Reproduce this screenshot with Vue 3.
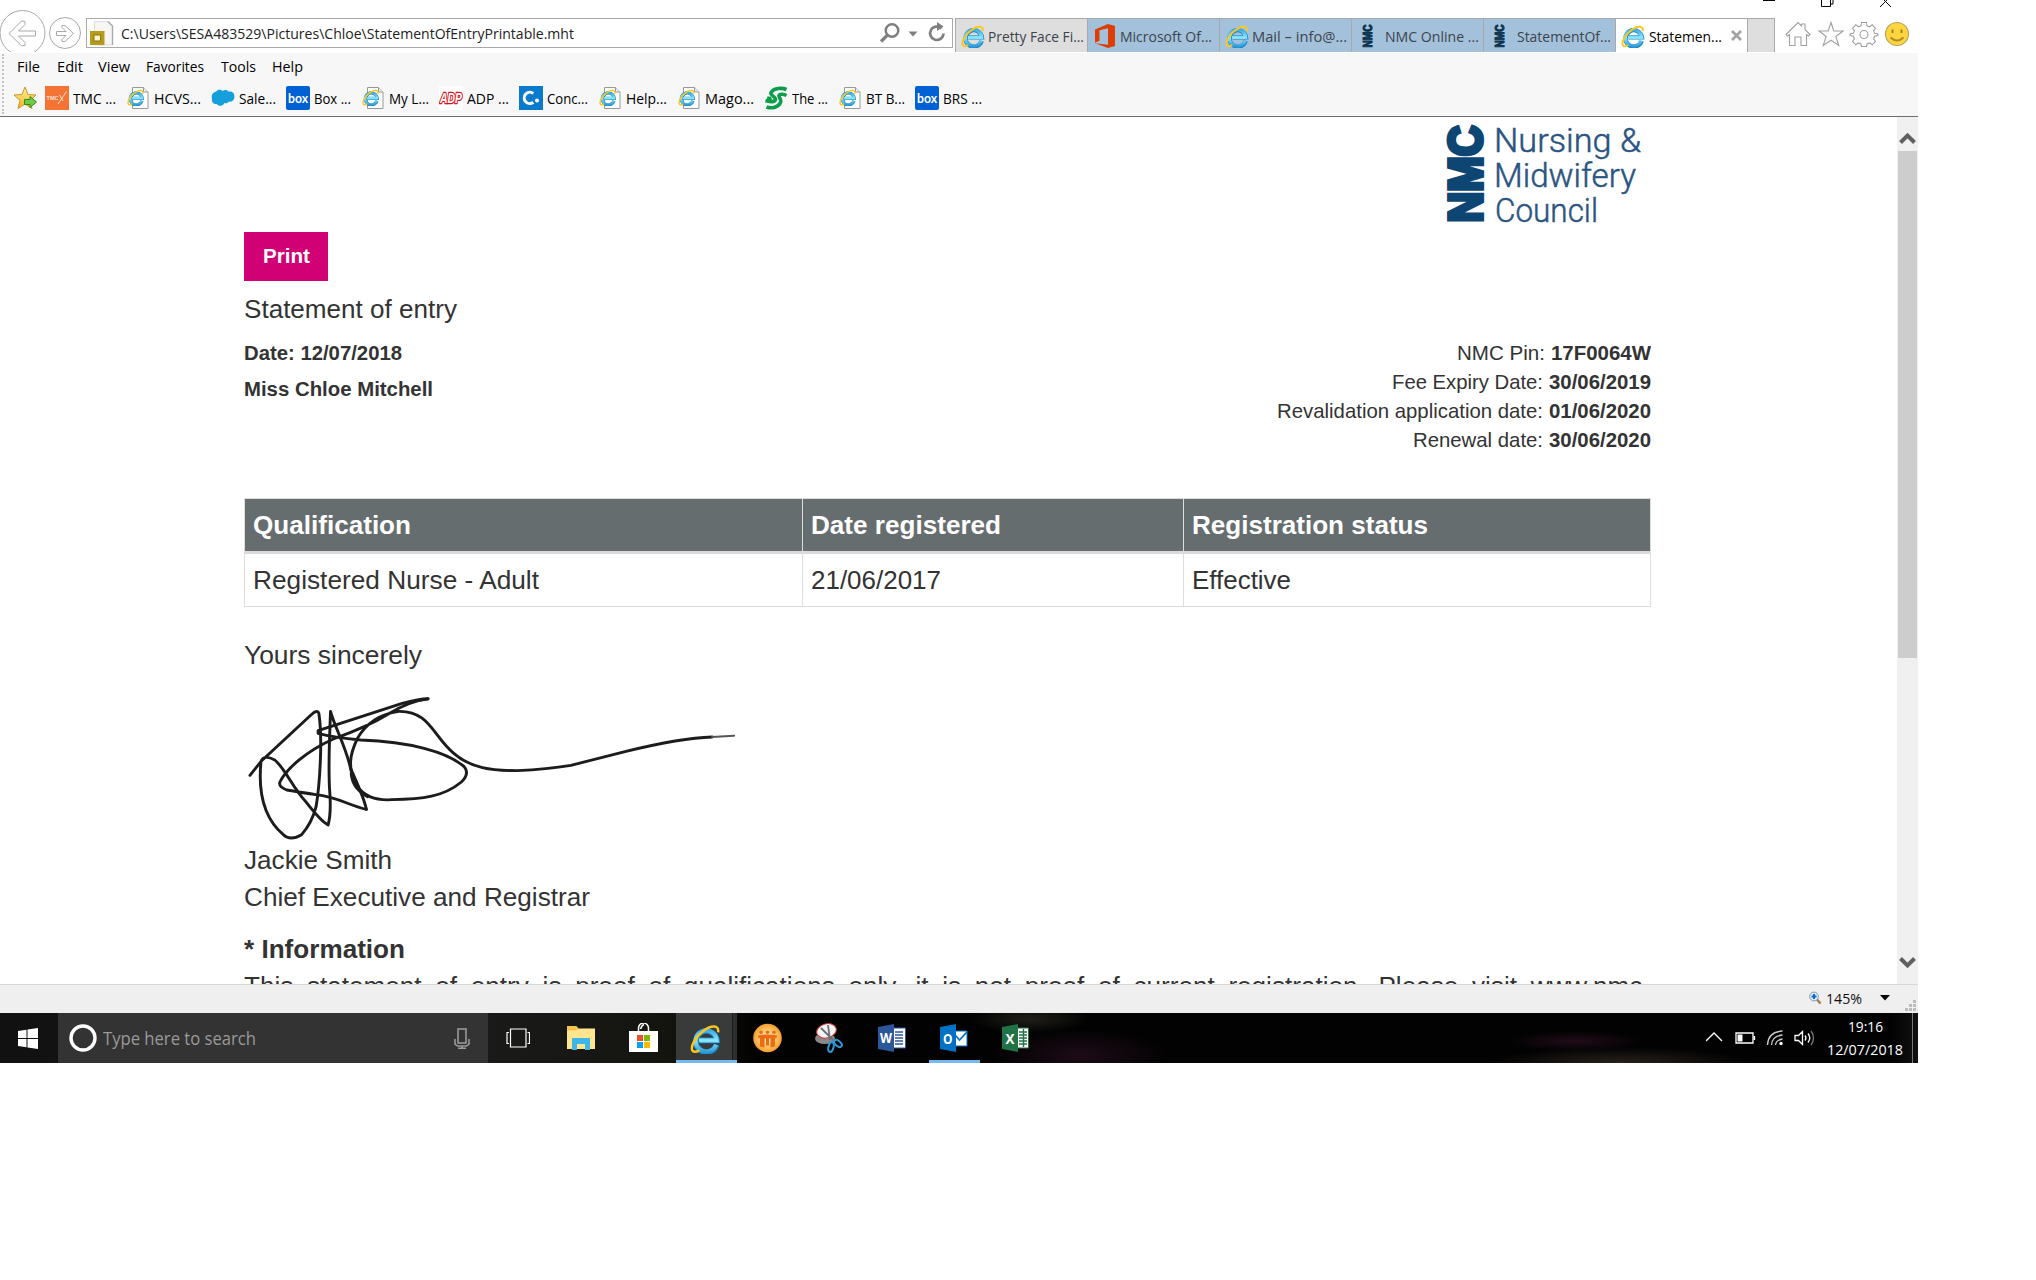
<script setup>
// Condenses a label horizontally so that it occupies the given width.
const vFit = {
  mounted(el, { value }) {
    const w = el.getBoundingClientRect().width
    if (!w) return
    el.style.transform = `scaleX(${value / w})`
    el.style.marginRight = `${value - w}px`
  },
}

const menus = [
  { t: 'File', w: 23, s: 39.5 },
  { t: 'Edit', w: 26, s: 41 },
  { t: 'View', w: 32, s: 48.5 },
  { t: 'Favorites', w: 58, s: 74.5 },
  { t: 'Tools', w: 35, s: 51 },
  { t: 'Help', w: 31, s: 50 },
]
const bookmarks = [
  { i: 'tmc', t: 'TMC ...', w: 43 },
  { i: 'page', t: 'HCVS...', w: 47 },
  { i: 'cloud', t: 'Sale...', w: 37 },
  { i: 'box', t: 'Box ...', w: 37 },
  { i: 'page', t: 'My L...', w: 40 },
  { i: 'adp', t: 'ADP ...', w: 42 },
  { i: 'concur', t: 'Conc...', w: 41 },
  { i: 'page', t: 'Help...', w: 41 },
  { i: 'page', t: 'Mago...', w: 49 },
  { i: 'schneider', t: 'The ...', w: 36 },
  { i: 'page', t: 'BT B...', w: 39 },
  { i: 'box', t: 'BRS ...', w: 39 },
]
const tabs = [
  { i: 'ie', t: 'Pretty Face Fi...', w: 96, c: 'grey' },
  { i: 'office', t: 'Microsoft Of...', w: 92, c: 'blue' },
  { i: 'ie', t: 'Mail – info@...', w: 95, c: 'blue' },
  { i: 'nmc', t: 'NMC Online ...', w: 94, c: 'blue' },
  { i: 'nmc', t: 'StatementOf...', w: 94, c: 'blue' },
  { i: 'ie', t: 'Statemen...', w: 73, c: 'active' },
]
const dates = [
  { k: 'NMC Pin:', v: '17F0064W', kw: 88, vw: 100 },
  { k: 'Fee Expiry Date:', v: '30/06/2019', kw: 151, vw: 102 },
  { k: 'Revalidation application date:', v: '01/06/2020', kw: 266, vw: 102 },
  { k: 'Renewal date:', v: '30/06/2020', kw: 130, vw: 102 },
]
</script>

<template>
  <svg class="defs" width="0" height="0">
    <defs>
      <linearGradient id="ieBlue" gradientUnits="userSpaceOnUse" x1="0" y1="4" x2="0" y2="23">
        <stop offset="0" stop-color="#2f9fdc" /><stop offset=".5" stop-color="#8be6fc" /><stop offset="1" stop-color="#2a97d6" />
      </linearGradient>
      <linearGradient id="gold" x1="0" y1="0" x2="0" y2="1">
        <stop offset="0" stop-color="#fff6a0" /><stop offset="1" stop-color="#f2b01e" />
      </linearGradient>
      <radialGradient id="orange"><stop offset="0" stop-color="#fff2cf" /><stop offset=".75" stop-color="#fbb84f" /><stop offset="1" stop-color="#f39a2b" /></radialGradient>
      <symbol id="ie" viewBox="0 0 24 24">
        <path d="M20.600 16.800A8.200 8.200 0 1 1 20.900 13.400H7.500" fill="none" stroke="#1a85c8" stroke-width="4.400" />
        <path d="M20.200 16.800A8.200 8.200 0 1 1 20.700 13.400H7" fill="none" stroke="url(#ieBlue)" stroke-width="3.200" />
        <path d="M21.800 7.200C22.600 1.300 16.500 1.600 10.500 6 4 10.800.3 18 1.800 21.200 2.700 23 5 22.400 7.200 21.200" fill="none" stroke="#fbc71d" stroke-width="1.900" />
      </symbol>
      <symbol id="page" viewBox="0 0 24 24">
        <path d="M6.500 1.500h11l4.500 4.500v16.500h-15.500z" fill="#fff" stroke="#999" /><path d="M17.500 1.500v4.500H22" fill="#eee" stroke="#999" />
        <use href="#ie" x="1" y="2.500" width="17.500" height="17.500" />
      </symbol>
      <symbol id="tmc" viewBox="0 0 24 24">
        <rect width="24" height="24" fill="#f37435" /><text x="1.500" y="13.500" font-size="5.500" font-weight="700" fill="#fde3d6" font-family="Liberation Sans, sans-serif" textLength="12" lengthAdjust="spacingAndGlyphs">TMC</text>
        <path d="M13 18 21.500 5.500M14.500 9l3.500 6" stroke="#fff" stroke-width=".8" />
      </symbol>
      <symbol id="cloud" viewBox="0 0 24 24">
        <path d="M5.800 18C2 18.500.4 15.500 1 12.800 0 9.500 2 6 5 5.800 6.500 3.200 10 3.200 11.600 5c2-1.600 5-1.200 6 .8 3.500-1.400 6.200 1.600 5.800 5.400-.3 3.200-2.600 4.800-5.400 4.400-1.200 2-3.400 2-4.600 1.300-1.600 3.600-6 3.600-7.600 1.100z" fill="#159fdb" />
      </symbol>
      <symbol id="box" viewBox="0 0 24 24">
        <rect width="24" height="24" rx="2" fill="#0061d5" /><text x="2" y="17" font-size="13" font-weight="700" fill="#fff" font-family="Lato, sans-serif" textLength="20" lengthAdjust="spacingAndGlyphs">box</text>
      </symbol>
      <symbol id="adp" viewBox="0 0 24 24">
        <rect width="24" height="24" fill="#fff" /><text x="1" y="16.800" font-size="14.500" font-weight="700" font-style="italic" fill="#fff" stroke="#d6141c" stroke-width="2.600" paint-order="stroke" font-family="Liberation Sans, sans-serif" textLength="22" lengthAdjust="spacingAndGlyphs">ADP</text>
      </symbol>
      <symbol id="concur" viewBox="0 0 24 24">
        <rect width="24" height="24" fill="#0a7acc" /><path d="M14.300 7.500a5.600 5.600 0 1 0 0 8.800" fill="none" stroke="#fff" stroke-width="3" /><circle cx="18" cy="14.500" r="2" fill="#fff" />
      </symbol>
      <symbol id="schneider" viewBox="0 0 24 24">
        <path d="M22.500 3.500C18 1.500 10 2 7 6.500 5.500 9.500 12 10.500 11.500 13.500 10.500 17 5.500 15.500 1.500 14.500M22.500 9.500C20 8 15.500 7.500 15 9.500c-.5 2 3 4 1.500 7-2 4.500-8.500 6.500-14 4.500M3 12c1.500.5 3 .8 4.500.3" fill="none" stroke="#0c9d4a" stroke-width="3.600" />
      </symbol>
      <symbol id="office" viewBox="0 0 24 24">
        <path d="M2 5.500 15 0l7 2v20l-7 2L2 19.200l13 1.500V4.300L6.500 6.200v10.600L2 18.800z" fill="#dc3e04" />
      </symbol>
      <symbol id="nmc" viewBox="0 0 24 24">
        <text transform="translate(16 23.500) rotate(-90)" font-size="12" font-weight="700" fill="#0b3450" stroke="#0b3450" stroke-width="1" font-family="Liberation Sans, sans-serif" textLength="23" lengthAdjust="spacingAndGlyphs">NMC</text>
      </symbol>
    </defs>
  </svg>

  <div class="screen">
    <div class="nav">
      <svg class="winbtns" width="140" height="8" viewBox="0 0 140 8" fill="none" stroke="#000">
        <path d="M3 .5h12M61.500-1v7.500h9V-1M73 -1v5h-2.500M120 7l5.500-5.500L131 7M120-4l5.500 5.500L131-4" />
      </svg>
      <svg class="arrows" width="86" height="52" viewBox="0 0 86 52" fill="none" stroke="#a9a9a9">
        <circle cx="22.500" cy="33" r="22.500" /><circle cx="65" cy="33" r="15.500" />
        <path d="M9 33.500 21.500 21l3.500.5v3L18.500 31h17v5h-17l6.500 6.500v3l-3.500.3z" />
        <path d="M73.500 33.500l-8.500-8h-3v2l4 4H56.500v4H66l-4 4v2h3z" />
      </svg>
      <div class="address">
        <svg width="24" height="25" viewBox="0 0 24 25"><path d="M4.500.5H18l4.500 4.500v19h-18z" fill="#f6f6f6" stroke="#ddd" /><path d="M18 .5 22.500 5v19" fill="none" stroke="#aaa" stroke-width="1.400" /><path d="M0 10h14.500v14H0z" fill="#b59a1b" /><path d="M4 14h6.500v6H4z" fill="#f9f4c9" stroke="#897411" /></svg>
        <span class="t" v-fit="453">C:\Users\SESA483529\Pictures\Chloe\StatementOfEntryPrintable.mht</span>
        <svg class="tools" width="68" height="24" viewBox="0 0 68 24" fill="none" stroke="#7f7f7f">
          <circle cx="13" cy="9.500" r="6.300" stroke-width="2.500" /><path d="M8.500 14 2 20.500" stroke-width="3.200" />
          <path d="M29.500 10.500h9l-4.500 5z" fill="#7f7f7f" stroke="none" />
          <path d="M62.500 7.500a6.700 6.700 0 1 0 2 5" stroke-width="2.700" /><path d="M58 1 64.500 5.500 58 10z" fill="#7f7f7f" stroke="none" />
        </svg>
      </div>
      <div class="tabs">
        <div v-for="(b, n) in tabs" :key="n" class="tab" :class="b.c">
          <svg :class="'i-' + b.i" width="24" height="24"><use :href="'#' + b.i" /></svg>
          <span class="t" v-fit="b.w">{{ b.t }}</span>
          <svg v-if="b.c === 'active'" class="close" width="11" height="11" viewBox="0 0 11 11"><path d="M1 1l9 9M10 1 1 10" stroke="#a3a3a3" stroke-width="2.800" /></svg>
        </div>
        <div class="newtab"></div>
      </div>
      <svg class="right" width="130" height="28" viewBox="0 0 130 28" fill="none" stroke="#a0a0a0" stroke-width="1.100">
        <path d="M1 14.500 13 2.500l3.500 3.500V4H20v5.500l5 5-1.500 1.500-2-1.500V25.500H16V17h-6v8.500H4.500V14.500l-2 1.500z" />
        <path d="M46 2.500l2.800 8.500H58l-7.200 5.500 3 9L46 20.200l-7.800 5.300 3-9L34 11h9.200z" />
        <path d="M76.500 2.500h5l.5 3.300 2.500 1 2.700-2 3.300 3.400-1.900 2.700 1 2.300 3.300.5v1.900l-3.300.6-1 2.500 1.900 2.700-3.300 3.400-2.700-1.900-2.500 1-.5 2.600h-5l-.5-2.600-2.500-1-2.700 1.900-3.300-3.400 1.900-2.700-1-2.500-3.300-.6v-1.900l3.300-.5 1-2.300-1.900-2.700 3.300-3.400 2.700 2 2.500-1z" /><circle cx="79" cy="14.500" r="4" />
        <circle cx="112" cy="14" r="11.500" fill="#fcd53f" stroke="#b5a468" /><path d="M107.500 9.500v3.500M116.500 9.500v3.500" stroke="#9b7a2c" stroke-width="1.800" /><path d="M105.500 17.500q6.500 6 13 0" stroke="#b08a24" stroke-width="2" />
      </svg>
    </div>

    <div class="bars">
      <div class="menu">
        <div v-for="m in menus" :key="m.t" :style="{ width: m.s + 'px' }"><span class="t" v-fit="m.w">{{ m.t }}</span></div>
      </div>
      <div class="favs">
        <svg class="star" width="24" height="24" viewBox="0 0 24 24"><path d="M12 1l3 7.500 8 .5-6 5.300L19 22.500 12 18l-7 4.500 2-8.200L1 9l8-.5z" fill="url(#gold)" stroke="#cb9426" /><path d="M11.500 13.500H17v-3l6.500 5.500L17 21.500v-3h-5.500z" fill="#6fcb45" stroke="#2f8a21" /></svg>
        <div v-for="(b, n) in bookmarks" :key="n" class="fav">
          <svg width="24" height="24"><use :href="'#' + b.i" /></svg>
          <span class="t" v-fit="b.w">{{ b.t }}</span>
        </div>
      </div>
    </div>

    <div class="view">
      <div class="page">
        <svg class="logo" width="210" height="115" viewBox="1441 117 210 115" font-family="Roboto, sans-serif" fill="#0d4573">
          <text transform="translate(1481.500 222.500) rotate(-90)" font-family="Liberation Sans, sans-serif" font-weight="700" font-size="48" stroke="#0d4573" stroke-width="4" textLength="97" lengthAdjust="spacingAndGlyphs">NMC</text>
          <g font-size="34" font-weight="300" fill="#2a5482" stroke="#2a5482" stroke-width=".5">
            <text x="1494" y="152" textLength="147" lengthAdjust="spacingAndGlyphs">Nursing &amp;</text>
            <text x="1494" y="187" textLength="142" lengthAdjust="spacingAndGlyphs">Midwifery</text>
            <text x="1495" y="222" textLength="103" lengthAdjust="spacingAndGlyphs">Council</text>
          </g>
        </svg>
        <button class="print"><span v-fit="47">Print</span></button>
        <h1><span v-fit="213">Statement of entry</span></h1>
        <div class="details">
          <div>
            <p><b v-fit="158">Date: 12/07/2018</b></p>
            <p class="name"><b v-fit="189">Miss Chloe Mitchell</b></p>
          </div>
          <div class="dates">
            <p v-for="d in dates" :key="d.k"><span class="k"><span v-fit="d.kw">{{ d.k }}</span></span><b v-fit="d.vw">{{ d.v }}</b></p>
          </div>
        </div>
        <table>
          <thead><tr><th><span v-fit="158">Qualification</span></th><th><span v-fit="190">Date registered</span></th><th><span v-fit="236">Registration status</span></th></tr></thead>
          <tbody><tr><td><span v-fit="286">Registered Nurse - Adult</span></td><td><span v-fit="130">21/06/2017</span></td><td><span v-fit="99">Effective</span></td></tr></tbody>
        </table>
        <div class="line yours"><span v-fit="178">Yours sincerely</span></div>
        <svg class="sign" width="500" height="169" viewBox="40.700 -21 1452 507" preserveAspectRatio="none" fill="none" stroke="#1c1c1c" stroke-width="8.500" stroke-linecap="round" stroke-linejoin="round">
          <path d="M58 286 92 242 232 108Q254 86 258 100C270 180 260 320 250 380C240 420 220 450 208 464Q175 484 155 464C105 420 80 350 90 245Q98 222 130 240C160 265 180 320 220 365Q265 425 285 435Q294 400 290 340C284 260 290 160 292 94C300 130 340 210 350 265Q390 355 396 388" />
          <path d="M396 388C350 378 310 350 250 344Q200 336 165 330Q140 320 145 306C165 265 220 215 300 177Q400 140 460 102T575 56Q550 56 500 70Q380 110 256 152V160Q300 172 380 180C520 185 630 215 680 260Q697 280 672 306C620 350 560 358 470 359C420 362 390 350 362 310C345 260 345 230 370 175Q410 105 490 94C580 92 590 170 650 220C700 265 760 272 835 272Q920 268 990 256L1150 214Q1310 174 1400 171" />
          <path d="M400 350Q355 325 352 280M362 315Q354 300 352 270M540 62 575 57" />
          <path d="M1400 171 1464 167" stroke="#555" stroke-width="6" />
        </svg>
        <div class="line"><span v-fit="148">Jackie Smith</span></div>
        <div class="line chief"><span v-fit="346">Chief Executive and Registrar</span></div>
        <div class="line info"><b v-fit="161">* Information</b></div>
        <div class="line proof">This statement of entry is proof of qualifications only, it is not proof of current registration. Please visit www.nmc-</div>
      </div>
      <div class="scroll">
        <svg width="21" height="34" viewBox="0 0 21 34"><path d="M3.500 25.500 10.500 18.500 17.500 25.500" fill="none" stroke="#606060" stroke-width="4" /></svg>
        <div class="thumb"></div>
        <svg width="21" height="34" viewBox="0 0 21 34"><path d="M3.500 8.500 10.500 15.500 17.500 8.500" fill="none" stroke="#606060" stroke-width="4" /></svg>
      </div>
    </div>

    <div class="status">
      <svg width="13" height="14" viewBox="0 0 13 14"><path d="M8 8.500l3.500 4" stroke="#a87b55" stroke-width="2.500" /><circle cx="5" cy="5.500" r="4.400" fill="#dceefc" stroke="#8297aa" /><path d="M5 3v5M2.500 5.500h5" stroke="#1468c8" stroke-width="2" /></svg>
      <span class="t" v-fit="36">145%</span>
      <svg class="caret" width="10" height="6" viewBox="0 0 10 6"><path d="M0 0h10L5 5.500z" /></svg>
      <svg class="grip" width="12" height="12" viewBox="0 0 12 12" fill="#bcbcbc"><path d="M8 0h3v3H8zM4 4h3v3H4zM8 4h3v3H8zM0 8h3v3H0zM4 8h3v3H4zM8 8h3v3H8z" /></svg>
    </div>

    <div class="taskbar">
      <div class="start"><svg width="20" height="21" viewBox="0 0 20 21" fill="#fff"><path d="M0 3l8.500-1.300v8.200H0zM9.500 1.500 20 0v9.900H9.500zM0 11h8.500v8.300L0 18zM9.500 11H20v10L9.500 19.400z" /></svg></div>
      <div class="search">
        <svg width="28" height="28" viewBox="0 0 28 28" fill="none"><circle cx="14" cy="14" r="12" stroke="#fff" stroke-width="3.400" /></svg>
        <span class="t" v-fit="153">Type here to search</span>
        <svg class="mic" width="16" height="21" viewBox="0 0 16 21" fill="none" stroke="#999" stroke-width="1.600"><rect x="4" y="1" width="8" height="14" /><path d="M1 11v5l2.500 2h9l2.500-2v-5M8 18v2.200M4 20.200h8" /></svg>
      </div>
      <div class="app view-btn"><svg width="24" height="20" viewBox="0 0 24 20" fill="none" stroke="#fff" stroke-width="1.200"><path d="M4.500 1h15.500v18H4.500zM3 4.500H1v11h2M21.500 4.500h2v11h-2" /></svg></div>
      <div class="app r2"><svg width="28" height="24" viewBox="0 0 28 24"><path d="M0 0h9l2.500 2.500H28V23H0z" fill="#ffe590" /><path d="M0 0h9l2.500 2.500L9 4.500H0z" fill="#f3c54c" /><path d="M5 24V12h18v12h-5v-6h-8v6z" fill="#3db5e8" /></svg></div>
      <div class="app r2"><svg width="29" height="30" viewBox="0 0 29 30"><path d="M9.500 9V5a5 5 0 0 1 10 0v4M11.500 6Q13 2 15 1.500" fill="none" stroke="#fff" stroke-width="1.500" /><path d="M0 8h29v21H0z" fill="#fff" /><path d="M8 12h6v6H8z" fill="#f25022" /><path d="M15 12h6v6h-6z" fill="#7fba00" /><path d="M8 19h6v6H8z" fill="#00a4ef" /><path d="M15 19h6v6h-6z" fill="#ffb900" /></svg></div>
      <div class="app on ie-app"><svg width="31" height="31"><use href="#ie" /></svg></div>
      <div class="app l2"><svg width="29" height="30" viewBox="0 0 29 30"><circle cx="14.500" cy="15" r="14.300" fill="url(#orange)" /><g fill="#ed6c13"><circle cx="8" cy="9.200" r="1.800" /><circle cx="14.500" cy="9.200" r="1.800" /><circle cx="21" cy="9.200" r="1.800" /><path d="M5 12.500q9.500-2 19 0v2l-2 1v8l-4.500 1v-9h-1.500v7h-3v-7h-1.500v9l-4.500-1v-8l-2-1z" /></g></svg></div>
      <div class="app l2"><svg width="28" height="30" viewBox="0 0 28 30"><ellipse cx="10" cy="15.500" rx="10" ry="5.500" fill="#888" /><ellipse cx="11.500" cy="8" rx="10" ry="7" transform="rotate(-15 11 8)" fill="#f5f5f5" stroke="#cb3038" /><path d="M6 5l13 13M13 2l2 15" stroke="#6b7178" stroke-width="1.800" /><ellipse cx="16" cy="24" rx="2.500" ry="5" transform="rotate(15 16 24)" fill="none" stroke="#2a9ad6" stroke-width="2" /><ellipse cx="23" cy="20.500" rx="2.500" ry="4.500" transform="rotate(-50 23 20.500)" fill="none" stroke="#2a9ad6" stroke-width="2" /></svg></div>
      <div class="app l1"><svg width="28" height="28" viewBox="0 0 28 28"><path d="M14 4h13.500v20H14z" fill="#fff" stroke="#2b579a" /><path d="M17 8h8M17 11h8M17 14h8M17 17h8M17 20h8" stroke="#2b579a" stroke-width="1.400" /><path d="M0 3 16 0v28L0 25z" fill="#2b579a" /><text x="2" y="19" font-size="14" font-weight="700" fill="#fff" font-family="Open Sans, sans-serif" textLength="12" lengthAdjust="spacingAndGlyphs">W</text></svg></div>
      <div class="app on l1"><svg width="28" height="28" viewBox="0 0 28 28"><path d="M14 7h13v15H14z" fill="#fff" stroke="#0072c6" /><path d="M15 11l4.500 5L27 8" fill="none" stroke="#0072c6" stroke-width="1.800" /><path d="M0 3 16 0v28L0 25z" fill="#0072c6" /><text x="3" y="19.500" font-size="15" font-weight="700" fill="#fff" font-family="Open Sans, sans-serif" textLength="9.500" lengthAdjust="spacingAndGlyphs">O</text></svg></div>
      <div class="app l1"><svg width="28" height="28" viewBox="0 0 28 28"><path d="M14 4h12.500v20H14z" fill="#fff" stroke="#217346" /><path d="M17 8h8M17 11h8M17 14h8M17 17h8M17 20h8M21.500 5v18" stroke="#217346" stroke-width="1.400" /><path d="M0 3 16 0v28L0 25z" fill="#217346" /><text x="3.500" y="19.500" font-size="15" font-weight="700" fill="#fff" font-family="Open Sans, sans-serif" textLength="9" lengthAdjust="spacingAndGlyphs">X</text></svg></div>
      <div class="tray">
        <svg width="110" height="18" viewBox="0 0 110 18" fill="none" stroke="#fff" stroke-width="1.300">
          <path d="M0 12l8-8 8 8" /><path d="M30 4h17v10H30zM48.500 7v4" /><path d="M31.500 5.500h5v7h-5z" fill="#fff" stroke="none" />
          <path d="M61.500 16Q62 3 76.500 2M65.500 16Q66 7 76.500 6M69.500 16Q70 11 76.500 10" stroke="#ccc" /><circle cx="75" cy="14.500" r="1.700" fill="#fff" stroke="none" />
          <path d="M89 6.500h3.500l4-4v13l-4-4H89zM99 6.500q2 2.500 0 5M102 4.500q3.500 4.500 0 9" /><path d="M105 2q5 7 0 14" stroke="#777" />
        </svg>
        <div class="clock"><div><span class="t" v-fit="35">19:16</span></div><div><span class="t" v-fit="76">12/07/2018</span></div></div>
      </div>
    </div>
  </div>
</template>

<style>
body { background: #fff; }
</style>
<style scoped>
* { box-sizing: border-box; }
svg { display: block; flex: none; }
.defs { position: absolute; }
.screen { width: 1918px; height: 1063px; display: flex; flex-direction: column; font-family: "Liberation Sans", sans-serif; color: #333; }
.t { font-family: "Open Sans", "Noto Sans", sans-serif; font-size: 15px; }
span, b { white-space: nowrap; }
.t, p b, .k span, .print span, h1 span, th span, td span, .line span, .line b { display: inline-block; transform-origin: 0 50%; }

.nav { height: 53px; display: flex; align-items: flex-start; position: relative; overflow: hidden; }
.winbtns { position: absolute; left: 1760px; top: 0; }
.address { width: 867px; height: 30px; margin-top: 18px; border: 1.500px solid #a9a9a9; display: flex; align-items: center; padding-left: 3px; color: #222; }
.address .t { margin-left: 7px; line-height: 28px; }
.address .tools { margin-left: auto; margin-right: 5px; }
.tabs { display: flex; margin: 18px 0 0 2px; width: 820px; height: 34px; }
.tab { width: 132px; flex: none; border: solid #a9a9a9; border-width: 1px 0 0 1px; display: flex; align-items: center; padding: 0 0 0 5px; color: #3b444c; }
.tab .t { margin-left: 3px; line-height: 24px; padding-top: 1px; }
.tab .i-nmc { margin-left: -1px; }
.tab .i-nmc + .t { margin-left: 5px; }
.grey { background: #dedede; }
.blue { background: #a3c1da; }
.active { background: #fff; color: #000; }
.tab.active .t { margin-left: 4px; }
.close { margin-left: 9px; }
.newtab { flex: 1; background: #dedede; border: solid #a9a9a9; border-width: 1px 1px 0 1px; }
.right { margin: 20px 0 0 10px; }

.bars { height: 64px; background: #f7f7f7; border-bottom: 1px solid #6d6d6d; color: #000; position: relative; padding-left: 13px; }
.bars::before { content: ""; position: absolute; left: 2px; top: 1px; bottom: 2px; border-left: 2px dotted #c4c4c4; }
.menu { display: flex; padding-left: 4px; height: 33px; line-height: 27px; }
.favs { display: flex; align-items: center; height: 24px; }
.star { margin-right: 8px; }
.fav { display: flex; align-items: center; margin-right: 10px; }
.fav .t { margin-left: 4px; line-height: 24px; }

.view { height: 867px; display: flex; overflow: hidden; }
.page { width: 1407px; margin-left: 244px; height: 867px; overflow: hidden; }
.logo { margin-left: auto; }
.print { display: block; width: 84px; height: 49px; border: 0; padding: 0 0 0 19px; text-align: left; background: #d10074; color: #fff; font: 700 20.300px "Liberation Sans", sans-serif; }
h1 { font-size: 26.100px; font-weight: 400; line-height: 36px; margin: 10px 0 12px; }
p { margin: 0; font-size: 20.300px; line-height: 29px; }
.details { display: flex; justify-content: space-between; height: 116px; }
.name { margin-top: 7px; }
.dates p { display: flex; justify-content: flex-end; }
.k { margin-right: 6px; }
table { margin-top: 43px; width: 1407px; table-layout: fixed; border-spacing: 0; border: 1px solid #ddd; font-size: 26.100px; line-height: 52px; text-align: left; color: #333; }
th, td { padding: 0 0 0 8px; height: 52px; border-left: 1px solid #ddd; }
th:first-child, td:first-child { width: 557px; border-left: 0; }
th:nth-child(2) { width: 381px; }
th { background: #666d6f; color: #fff; border-bottom: 3px solid #dcdadd; height: 55px; }
.line { font-size: 26.100px; line-height: 36px; height: 36px; }
.yours { margin-top: 30px; }
.chief { margin-top: 1px; }
.info { margin-top: 16px; }
.proof { margin-top: 1px; text-align-last: justify; white-space: normal; }
.scroll { width: 21px; margin-left: auto; background: #f0f0f0; display: flex; flex-direction: column; }
.thumb { height: 507px; margin: 0 1px 292px; background: #cdcdcd; flex: none; }

.status { height: 29px; background: #efefef; border-top: 1px solid #d7d7d7; display: flex; align-items: center; padding: 0 0 2px 1809px; color: #111; }
.status .t { margin-left: 4px; }
.status .caret { margin-left: 18px; }
.grip { margin: 15px 0 0 15px; }

.taskbar { height: 50px; display: flex; align-items: stretch; color: #fff; background: radial-gradient(ellipse 90px 26px at 1080px 42px, #1d0b17, transparent), radial-gradient(ellipse 60px 14px at 1030px 6px, #201f18, transparent), radial-gradient(ellipse 130px 16px at 1620px 50px, #28211b, transparent), radial-gradient(ellipse 70px 10px at 1575px 28px, #200c19, transparent), linear-gradient(90deg, #111 0, #1a1a1a 480px, #14140f 670px, #020202 760px, #020202 1890px, #111 1918px); }
.start { width: 58px; padding: 15px 0 0 18px; }
.search { width: 430px; background: #333; display: flex; align-items: center; padding-left: 11px; color: #999; }
.search .t { font-size: 18px; margin-left: 6px; }
.mic { margin-left: auto; margin-right: 18px; }
.app { width: 62px; display: flex; align-items: center; justify-content: center; }
.view-btn { width: 60px; }
.r2 { padding-left: 4px; }
.l2 { padding-right: 4px; }
.l1 { padding-right: 2px; }
.app.on { width: 51px; margin: 0 6px 0 5px; border-bottom: 3px solid #76b9ed; padding-top: 3px; }
.app.ie-app { width: 61px; margin: 0 1px 0 4px; padding-right: 3px; background: linear-gradient(90deg, #393b3b 56px, #1a1b1b 56px, #1a1b1b 57px, #2c2d2d 57px); }
.tray { margin-left: auto; display: flex; align-items: center; width: 212px; border-right: 1px solid #777; margin-right: 5px; padding-left: 5px; }
.tray > svg { width: 110px; }
.clock { width: 76px; margin-left: 11px; line-height: 23px; display: flex; flex-direction: column; align-items: center; }
</style>
